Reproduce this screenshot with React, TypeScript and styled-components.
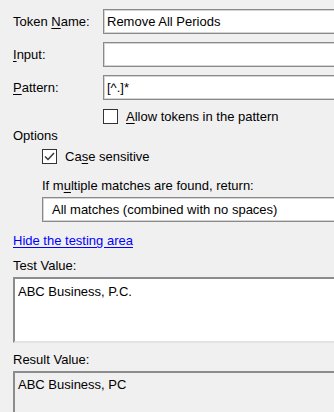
import { ReactNode } from 'react';
import styled, { createGlobalStyle } from 'styled-components';

// WinForms-like token editor, the right edge of the dialog is cut off

const GlobalStyle = createGlobalStyle`
  html, body {
    margin: 0;
    background: #f0f0f0;
    overflow: hidden;
  }
  body {
    font-family: 'Liberation Sans', Arial, sans-serif;
    font-size: 13px;
    color: #000;
  }
`;

const Check = ({ checked }: { checked?: boolean }) => (
  <StyledBox>
    {checked && (
      <svg width='13' height='13' viewBox='0 0 13 13'>
        <polyline
          points='2,6.5 5,9.5 11,3'
          fill='none'
          stroke='#333'
          strokeWidth='1.4'
        />
      </svg>
    )}
  </StyledBox>
);

const Key = ({ children }: { children: ReactNode }) => <StyledKey>{children}</StyledKey>;

const App = () => {
  return (
    <>
      <GlobalStyle />
      <StyledPanel>
        <StyledGrid>
          <StyledLabel>
            Token <Key>N</Key>ame:
          </StyledLabel>
          <StyledTextBox defaultValue='Remove All Periods' />
          <StyledLabel>
            <Key>I</Key>nput:
          </StyledLabel>
          <StyledTextBox defaultValue='' />
          <StyledLabel>
            <Key>P</Key>attern:
          </StyledLabel>
          <StyledTextBox defaultValue='[^.]*' />
        </StyledGrid>

        <StyledCheckRow $indent={90} $top={9}>
          <Check />
          <span>
            <Key>A</Key>llow tokens in the pattern
          </span>
        </StyledCheckRow>

        <StyledText $top={4}>Options</StyledText>

        <StyledCheckRow $indent={29} $top={6}>
          <Check checked />
          <span>
            Ca<Key>s</Key>e sensitive
          </span>
        </StyledCheckRow>

        <StyledText $top={14} $indent={29}>
          If m<Key>u</Key>ltiple matches are found, return:
        </StyledText>
        <StyledCombo>All matches (combined with no spaces)</StyledCombo>

        <StyledLink href='#'>Hide the testing area</StyledLink>

        <StyledText $top={10}>Test Value:</StyledText>
        <StyledTestArea defaultValue='ABC Business, P.C.' />

        <StyledText $top={9}>Result Value:</StyledText>
        <StyledResult>ABC Business, PC</StyledResult>
      </StyledPanel>
    </>
  );
};

const StyledPanel = styled.div`
  display: flex;
  flex-direction: column;
  align-items: flex-start;
  padding: 9px 0 0 13px;
`;

const StyledGrid = styled.div`
  display: grid;
  grid-template-columns: 90px 300px;
  grid-auto-rows: 25px;
  row-gap: 8px;
  align-items: center;
`;

const StyledLabel = styled.label`
  line-height: 15px;
  white-space: nowrap;
`;

const StyledKey = styled.u`
  text-decoration-thickness: 1px;
  text-underline-offset: 2px;
`;

const StyledTextBox = styled.input`
  box-sizing: border-box;
  width: 100%;
  height: 25px;
  margin: 0;
  padding: 0 3px;
  border: 1px solid #8a8a8a;
  box-shadow: inset 0 0 0 1px #d4d4d4;
  background: #fff;
  font: inherit;
  color: #000;
  outline: none;
`;

const StyledCheckRow = styled.label<{ $indent: number; $top: number }>`
  display: flex;
  align-items: center;
  gap: 8px;
  height: 15px;
  margin: ${(p) => p.$top}px 0 0 ${(p) => p.$indent}px;
  line-height: 15px;
  white-space: nowrap;
`;

const StyledBox = styled.span`
  box-sizing: border-box;
  display: flex;
  align-items: center;
  justify-content: center;
  width: 15px;
  height: 15px;
  border: 1px solid #333;
  background: #fff;
`;

const StyledText = styled.div<{ $top: number; $indent?: number }>`
  margin: ${(p) => p.$top}px 0 0 ${(p) => p.$indent ?? 0}px;
  line-height: 15px;
  white-space: nowrap;
`;

const StyledCombo = styled.div`
  box-sizing: border-box;
  width: 320px;
  height: 25px;
  margin: 4px 0 0 29px;
  padding: 0 9px;
  display: flex;
  align-items: center;
  border: 1px solid #8a8a8a;
  box-shadow: inset 0 0 0 1px #d4d4d4;
  background: #fff;
  white-space: nowrap;
`;

const StyledLink = styled.a`
  margin-top: 11px;
  line-height: 15px;
  color: #0000ff;
  text-decoration: underline;
  text-underline-offset: 2px;
`;

const StyledTestArea = styled.textarea`
  box-sizing: border-box;
  width: 340px;
  height: 66px;
  margin: 4px 0 0;
  padding: 5px 3px;
  border-style: solid;
  border-width: 2px;
  border-color: #8c8c8c #e3e3e3 #e3e3e3 #8c8c8c;
  background: #fff;
  font: inherit;
  line-height: 15px;
  color: #000;
  resize: none;
  outline: none;
`;

const StyledResult = styled.div`
  box-sizing: border-box;
  width: 340px;
  height: 60px;
  margin-top: 4px;
  padding: 4px 3px;
  border-style: solid;
  border-width: 2px;
  border-color: #8c8c8c #e3e3e3 #e3e3e3 #8c8c8c;
  background: #f0f0f0;
  line-height: 15px;
`;

export default App;
